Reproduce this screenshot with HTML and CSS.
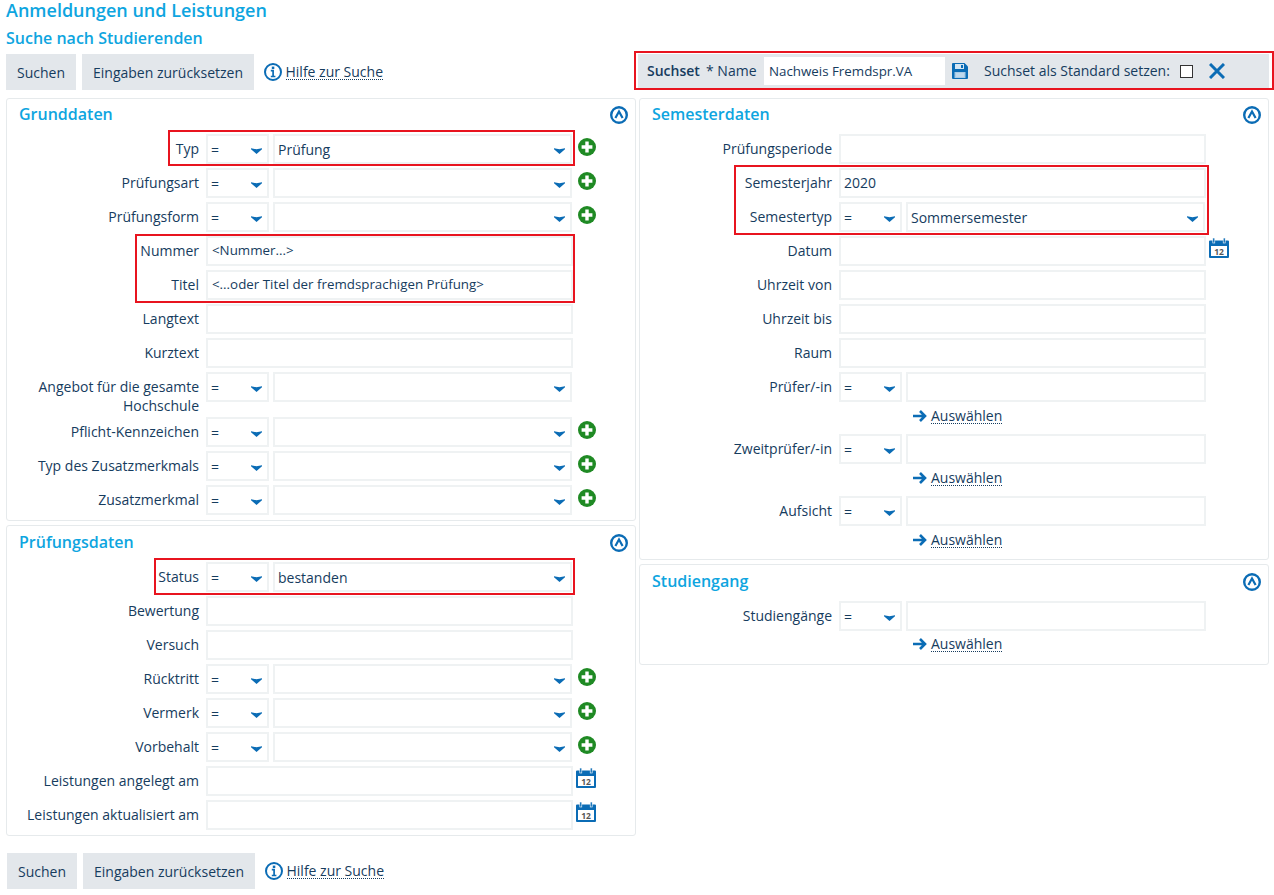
FILE: index.html
```html
<!DOCTYPE html>
<html lang="de">
<head>
<meta charset="utf-8">
<title>Anmeldungen und Leistungen</title>
<link rel="stylesheet" href="styles.css">
</head>
<body>
<svg class="defs" width="0" height="0" aria-hidden="true">
  <symbol id="chev" viewBox="0 0 11 6"><path d="M0 0.200L5.500 1.300L11 0.200V1.200L5.500 6L0 1.200z" fill="#0b6cb5"/></symbol>
  <symbol id="plus" viewBox="0 0 18 18"><circle cx="9" cy="9" r="9" fill="#1f8a24"/><path d="M9 3.600v10.800M3.600 9h10.800" stroke="#fff" stroke-width="3.400"/></symbol>
  <symbol id="cal" viewBox="0 0 20 20"><path d="M1 2.500h18a1 1 0 0 1 1 1V19a1 1 0 0 1-1 1H1a1 1 0 0 1-1-1V3.500a1 1 0 0 1 1-1z" fill="#0b6cb5"/><rect x="2" y="8" width="16" height="10" fill="#fff"/><rect x="3.800" y="0" width="2" height="5" fill="#0b6cb5" stroke="#fff" stroke-width=".6"/><rect x="14.200" y="0" width="2" height="5" fill="#0b6cb5" stroke="#fff" stroke-width=".6"/></symbol>
  <symbol id="arrow" viewBox="0 0 14 12"><path d="M0 6h11M7 1l5 5-5 5" fill="none" stroke="#0b6cb5" stroke-width="2.600"/></symbol>
  <symbol id="up" viewBox="0 0 18 18"><circle cx="9" cy="9" r="7.800" fill="none" stroke="#0b6cb5" stroke-width="2.400"/><path d="M5.400 12L9 5.500l3.600 6.500" fill="none" stroke="#0b6cb5" stroke-width="2.200"/></symbol>
  <symbol id="info" viewBox="0 0 18 18"><circle cx="9" cy="9" r="8" fill="none" stroke="#0b6cb5" stroke-width="2"/><rect x="7.800" y="3.600" width="2.500" height="2.400" fill="#0b6cb5"/><path d="M6.800 7.600h2.300v5.800M6.800 13.500h4.600" fill="none" stroke="#0b6cb5" stroke-width="1.700"/></symbol>
</svg>

<h1 class="title">Anmeldungen und Leistungen</h1>
<h2 class="subtitle">Suche nach Studierenden</h2>

<div class="toolbar">
  <button class="btn" type="button">Suchen</button>
  <button class="btn" type="button">Eingaben zurücksetzen</button>
  <a class="help" href="#"><svg class="i18"><use href="#info"/></svg><span class="link">Hilfe zur Suche</span></a>
  <div class="suchset">
    <span class="red red-suchset"></span>
    <strong class="ss-title">Suchset</strong>
    <span class="ss-name">* Name</span>
    <input class="ss-input" type="text" value="Nachweis Fremdspr.VA">
    <svg class="ss-save" viewBox="0 0 16 16"><path d="M1 0h11.500L16 3.500V15a1 1 0 0 1-1 1H1a1 1 0 0 1-1-1V1a1 1 0 0 1 1-1z" fill="#0b6cb5"/><rect x="3" y="1" width="9" height="5" fill="#d5e6f3"/><rect x="9" y="2" width="2" height="3" fill="#0b6cb5"/><rect x="2.500" y="9" width="11" height="6" fill="#a9cbe6"/><path d="M4 11h8M4 13h8" stroke="#d5e6f3"/></svg>
    <span class="ss-label">Suchset als Standard setzen:</span>
    <span class="ss-check"></span>
    <svg class="ss-x" viewBox="0 0 16 16"><path d="M1 1l14 14M15 1L1 15" stroke="#0b6cb5" stroke-width="3"/></svg>
  </div>
</div>

<div class="columns">
  <div class="col">
    <section class="panel">
      <header class="panel-head"><h3>Grunddaten</h3><svg class="i18"><use href="#up"/></svg></header>
      <span class="red red-typ"></span>
      <span class="red red-num"></span>
      <div class="row"><label>Typ</label><div class="sel op">=<svg class="chev"><use href="#chev"/></svg></div><div class="sel val">Prüfung<svg class="chev"><use href="#chev"/></svg></div><svg class="add"><use href="#plus"/></svg></div>
      <div class="row"><label>Prüfungsart</label><div class="sel op">=<svg class="chev"><use href="#chev"/></svg></div><div class="sel val"><svg class="chev"><use href="#chev"/></svg></div><svg class="add"><use href="#plus"/></svg></div>
      <div class="row"><label>Prüfungsform</label><div class="sel op">=<svg class="chev"><use href="#chev"/></svg></div><div class="sel val"><svg class="chev"><use href="#chev"/></svg></div><svg class="add"><use href="#plus"/></svg></div>
      <div class="row"><label>Nummer</label><div class="txt small">&lt;Nummer...&gt;</div></div>
      <div class="row"><label>Titel</label><div class="txt small">&lt;...oder Titel der fremdsprachigen Prüfung&gt;</div></div>
      <div class="row"><label>Langtext</label><div class="txt"></div></div>
      <div class="row"><label>Kurztext</label><div class="txt"></div></div>
      <div class="row tall"><label>Angebot für die gesamte Hochschule</label><div class="sel op">=<svg class="chev"><use href="#chev"/></svg></div><div class="sel val"><svg class="chev"><use href="#chev"/></svg></div></div>
      <div class="row"><label>Pflicht-Kennzeichen</label><div class="sel op">=<svg class="chev"><use href="#chev"/></svg></div><div class="sel val"><svg class="chev"><use href="#chev"/></svg></div><svg class="add"><use href="#plus"/></svg></div>
      <div class="row"><label>Typ des Zusatzmerkmals</label><div class="sel op">=<svg class="chev"><use href="#chev"/></svg></div><div class="sel val"><svg class="chev"><use href="#chev"/></svg></div><svg class="add"><use href="#plus"/></svg></div>
      <div class="row"><label>Zusatzmerkmal</label><div class="sel op">=<svg class="chev"><use href="#chev"/></svg></div><div class="sel val"><svg class="chev"><use href="#chev"/></svg></div><svg class="add"><use href="#plus"/></svg></div>
    </section>
    <section class="panel">
      <header class="panel-head head-s"><h3>Prüfungsdaten</h3><svg class="i18"><use href="#up"/></svg></header>
      <span class="red red-status"></span>
      <div class="row"><label>Status</label><div class="sel op">=<svg class="chev"><use href="#chev"/></svg></div><div class="sel val">bestanden<svg class="chev"><use href="#chev"/></svg></div></div>
      <div class="row"><label>Bewertung</label><div class="txt"></div></div>
      <div class="row"><label>Versuch</label><div class="txt"></div></div>
      <div class="row"><label>Rücktritt</label><div class="sel op">=<svg class="chev"><use href="#chev"/></svg></div><div class="sel val"><svg class="chev"><use href="#chev"/></svg></div><svg class="add"><use href="#plus"/></svg></div>
      <div class="row"><label>Vermerk</label><div class="sel op">=<svg class="chev"><use href="#chev"/></svg></div><div class="sel val"><svg class="chev"><use href="#chev"/></svg></div><svg class="add"><use href="#plus"/></svg></div>
      <div class="row"><label>Vorbehalt</label><div class="sel op">=<svg class="chev"><use href="#chev"/></svg></div><div class="sel val"><svg class="chev"><use href="#chev"/></svg></div><svg class="add"><use href="#plus"/></svg></div>
      <div class="row"><label>Leistungen angelegt am</label><div class="txt"></div><svg class="calendar" viewBox="0 0 20 20"><use href="#cal"/><text class="cal-num" x="10" y="16.600">12</text></svg></div>
      <div class="row"><label>Leistungen aktualisiert am</label><div class="txt"></div><svg class="calendar" viewBox="0 0 20 20"><use href="#cal"/><text class="cal-num" x="10" y="16.600">12</text></svg></div>
    </section>
  </div>
  <div class="col">
    <section class="panel">
      <header class="panel-head"><h3>Semesterdaten</h3><svg class="i18"><use href="#up"/></svg></header>
      <span class="red red-sem"></span>
      <div class="row"><label>Prüfungsperiode</label><div class="txt"></div></div>
      <div class="row"><label>Semesterjahr</label><div class="txt">2020</div></div>
      <div class="row"><label>Semestertyp</label><div class="sel op">=<svg class="chev"><use href="#chev"/></svg></div><div class="sel val">Sommersemester<svg class="chev"><use href="#chev"/></svg></div></div>
      <div class="row"><label>Datum</label><div class="txt"></div><svg class="calendar" viewBox="0 0 20 20"><use href="#cal"/><text class="cal-num" x="10" y="16.600">12</text></svg></div>
      <div class="row"><label>Uhrzeit von</label><div class="txt"></div></div>
      <div class="row"><label>Uhrzeit bis</label><div class="txt"></div></div>
      <div class="row"><label>Raum</label><div class="txt"></div></div>
      <div class="row"><label>Prüfer/-in</label><div class="sel op">=<svg class="chev"><use href="#chev"/></svg></div><div class="txt val"></div></div>
      <a class="pick" href="#"><svg class="arrow"><use href="#arrow"/></svg><span class="link">Auswählen</span></a>
      <div class="row"><label>Zweitprüfer/-in</label><div class="sel op">=<svg class="chev"><use href="#chev"/></svg></div><div class="txt val"></div></div>
      <a class="pick" href="#"><svg class="arrow"><use href="#arrow"/></svg><span class="link">Auswählen</span></a>
      <div class="row"><label>Aufsicht</label><div class="sel op">=<svg class="chev"><use href="#chev"/></svg></div><div class="txt val"></div></div>
      <a class="pick" href="#"><svg class="arrow"><use href="#arrow"/></svg><span class="link">Auswählen</span></a>
    </section>
    <section class="panel">
      <header class="panel-head head-s"><h3>Studiengang</h3><svg class="i18"><use href="#up"/></svg></header>
      <div class="row"><label>Studiengänge</label><div class="sel op">=<svg class="chev"><use href="#chev"/></svg></div><div class="txt val"></div></div>
      <a class="pick pick-s" href="#"><svg class="arrow"><use href="#arrow"/></svg><span class="link">Auswählen</span></a>
    </section>
  </div>
</div>

<div class="toolbar bottom">
  <button class="btn" type="button">Suchen</button>
  <button class="btn" type="button">Eingaben zurücksetzen</button>
  <a class="help" href="#"><svg class="i18"><use href="#info"/></svg><span class="link">Hilfe zur Suche</span></a>
</div>
</body>
</html>
```

FILE: styles.css
```css
* { box-sizing: border-box; }
html, body { margin: 0; }
body {
  width: 1274px;
  height: 895px;
  overflow: hidden;
  padding: 0 0 0 6px;
  background: #fff;
  color: #163c5e;
  font: 14px/19px "Open Sans", sans-serif;
}
.defs { position: absolute; }
.title { margin: 0; height: 28px; font-size: 18px; line-height: 21px; font-weight: 600; color: #0ea5e0; }
.subtitle { margin: 0; height: 26px; font-size: 16px; line-height: 20px; font-weight: 600; color: #0ea5e0; }

.toolbar { display: flex; align-items: flex-start; height: 44px; }
.btn {
  height: 36px; padding: 0 11px; margin: 0 6px 0 0; border: 0;
  background: #e3e7eb; color: #163c5e; font: inherit;
}
.help { display: flex; align-items: center; gap: 3.5px; height: 36px; margin-left: 4px; color: #163c5e; text-decoration: none; }
.i18 { width: 18px; height: 18px; flex: none; }
.link { border-bottom: 1px dotted #163c5e; line-height: 15px; }

.suchset {
  position: relative; display: flex; align-items: center;
  width: 631px; height: 34px; margin-left: auto; margin-right: 5px;
  padding-left: 9px; background: #e3e7eb;
}
.ss-title { font-weight: 600; width: 59px; margin-bottom: 2px; }
.ss-name { width: 58px; margin-bottom: 2px; }
.ss-input { width: 181px; height: 28px; padding: 0 5px; border: 0; background: #fff; color: #163c5e; font: 13.333px "Open Sans", sans-serif; }
.ss-save { width: 16px; height: 16px; margin: 0 16px 0 7px; }
.ss-label { width: 186px; margin-bottom: 2px; }
.ss-check { width: 13px; height: 13px; margin: 0 16px 0 10px; border: 1px solid #333; background: #fff; }
.ss-x { width: 16px; height: 16px; }

.red { position: absolute; border: 2px solid #e8141f; pointer-events: none; }
.red-suchset { left: -4px; top: -3px; width: 640px; height: 39px; }
.red-typ { left: 161px; top: 31px; width: 407px; height: 36px; }
.red-num { left: 128px; top: 135px; width: 440px; height: 69px; }
.red-status { left: 147px; top: 32px; width: 421px; height: 37px; }
.red-sem { left: 94px; top: 66px; width: 475px; height: 70px; }

.columns { display: flex; gap: 3px; align-items: flex-start; height: 755px; }
.col { width: 630px; display: flex; flex-direction: column; gap: 4px; }
.panel { position: relative; width: 630px; padding: 0 0 1px; border: 1px solid #e6eaec; border-radius: 3px; }
.panel-head { display: flex; justify-content: space-between; align-items: flex-start; height: 35px; padding: 5px 7px 0 12px; }
.panel-head h3 { margin: 0; font-size: 16px; line-height: 20px; font-weight: 600; color: #0ea5e0; }
.panel-head .i18 { margin-top: 2px; }
.head-s { height: 36px; padding-top: 6px; }

.row { display: flex; align-items: flex-start; min-height: 30px; margin-bottom: 4px; }
.row.tall { height: 41px; }
.row label { width: 199px; flex: none; padding: 5px 7px 0 0; text-align: right; }
.sel, .txt { position: relative; height: 30px; border: 2px solid #eff2f3; background: #fff; padding: 3px 3px 0; }
.sel { padding-top: 4px; }
.txt { width: 367px; }
.small { font-size: 13.333px; padding-left: 4px; }
.op { width: 63px; flex: none; }
.val { width: 299px; flex: none; margin-left: 4px; }
.txt.val { width: 300px; }
.chev { position: absolute; right: 5px; top: 12px; width: 11px; height: 6px; }
.add { width: 18px; height: 18px; margin: 4px 0 0 6px; flex: none; }
.calendar { width: 20px; height: 20px; margin: 2px 0 0 3px; flex: none; }
.cal-num { font: 700 8.5px "Open Sans", sans-serif; fill: #555; text-anchor: middle; }
.pick { display: flex; align-items: center; gap: 4px; height: 28px; margin: -4px 0 4px 273px; color: #163c5e; text-decoration: none; }
.pick-s { height: 26px; margin-bottom: 6px; }
.arrow { width: 14px; height: 12px; flex: none; }

.bottom { margin-left: 1px; }
```
